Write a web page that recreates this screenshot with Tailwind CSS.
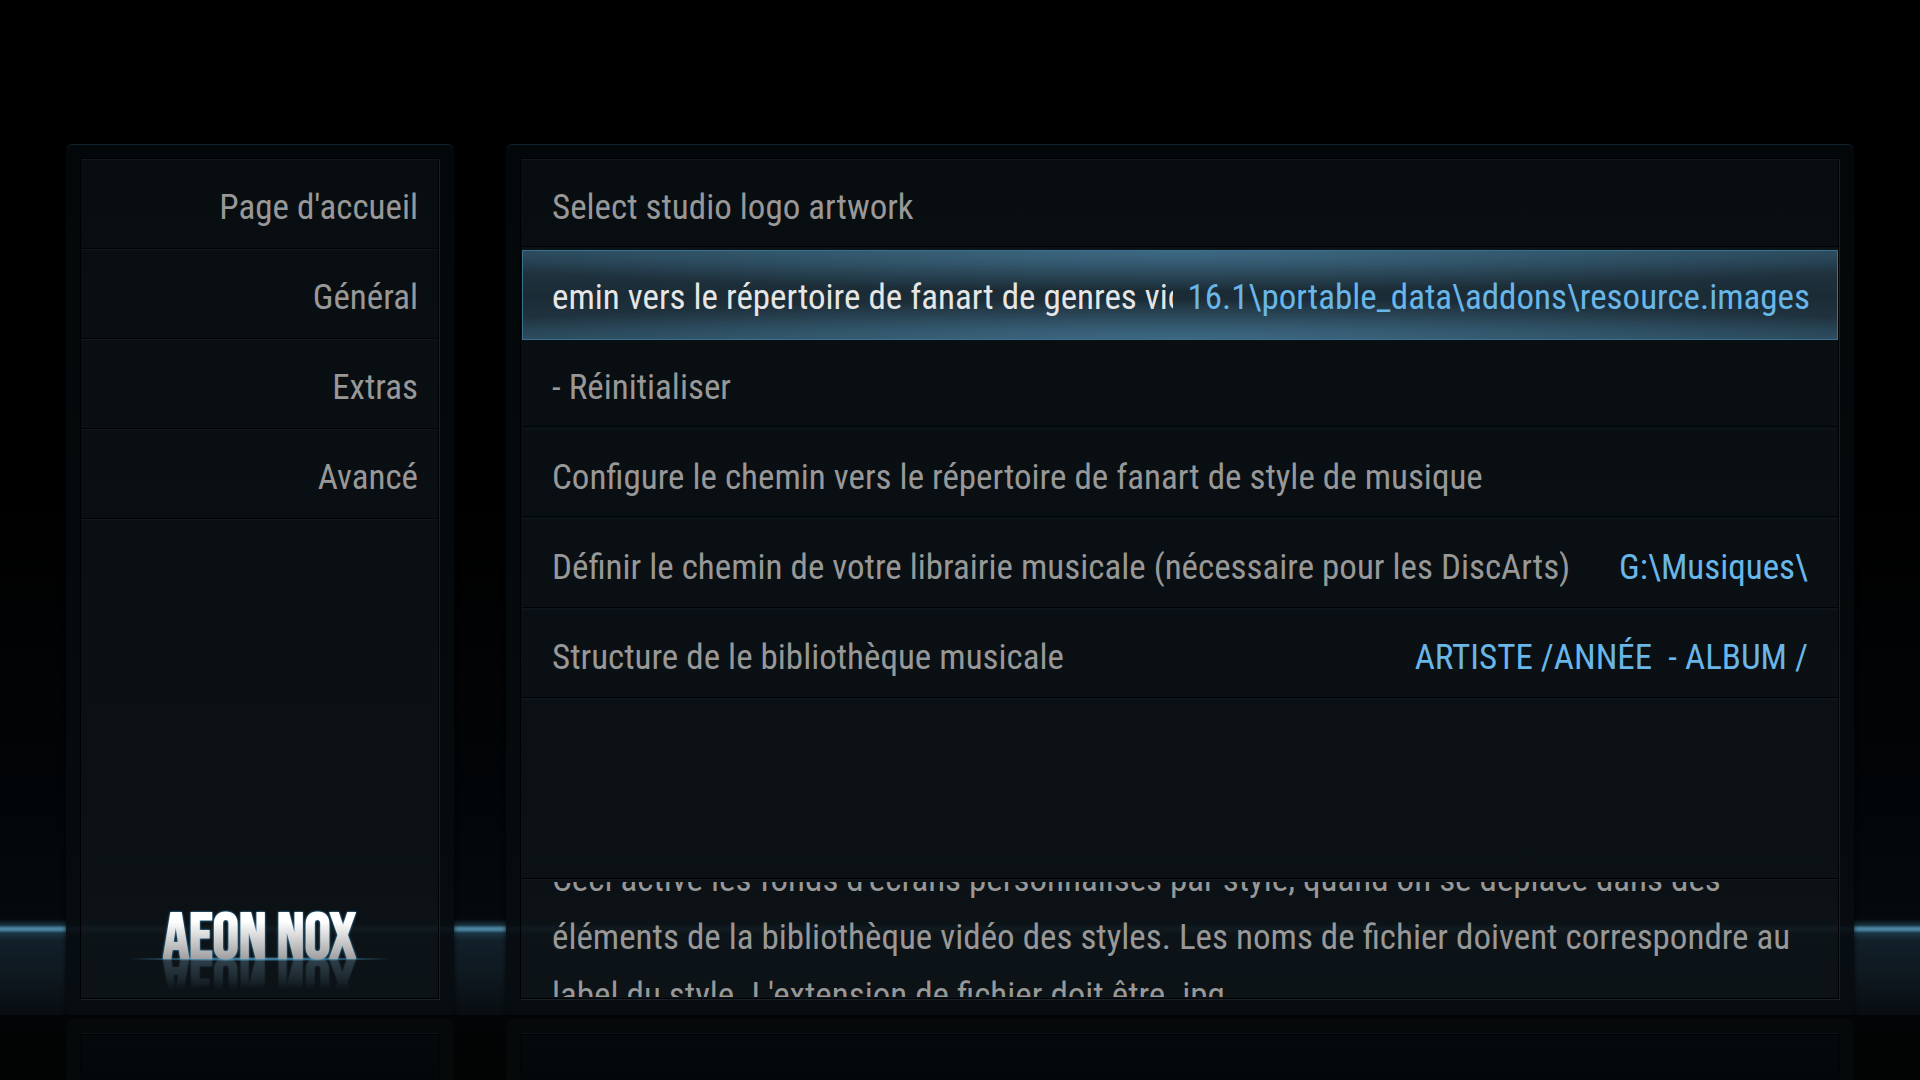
<!DOCTYPE html>
<html lang="fr">
<head>
<meta charset="utf-8">
<meta name="viewport" content="width=device-width, initial-scale=1">
<title>Aeon Nox - Extras</title>
<script src="https://cdn.jsdelivr.net/npm/@tailwindcss/browser@4"></script>
</head>
<body class="flex min-h-screen flex-col overflow-x-hidden bg-black bg-[linear-gradient(to_top,#020403_0px,#030607_45px,#0d151b_90px,#12202a_140px,#1a3644_147px,#4b83a0_150px,#4b83a0_152px,#17303c_155px,#05090b_161px,#020507_300px,#000_570px)] font-['Roboto_Condensed',Roboto,sans-serif] text-[35px] text-[#989898]">

<div class="grid flex-1 grid-cols-[388px_minmax(0,1fr)] gap-x-[52px] px-[66px] pt-[144px]">

  <!-- Category menu -->
  <aside class="flex flex-col rounded-md border-t border-[#10252f] bg-linear-to-b from-[#03080b]/92 to-[#070c10]/93 pt-[13px] pr-[15px] pb-4 pl-[14px] shadow-[0_0_5px_#000c]">
    <div class="flex flex-1 flex-col border border-black bg-[#8fa8bc]/4 pt-px shadow-[inset_0_1px_0_#12191e,1px_1px_0_#182228]">
      <nav aria-label="Catégories">
        <ul>
          <li><button type="button" class="h-[90px] w-full px-5 pt-1.5 text-right shadow-[inset_0_-1px_0_#10181c,inset_0_-2px_0_#010304]">Page d'accueil</button></li>
          <li><button type="button" class="h-[90px] w-full px-5 pt-1.5 text-right shadow-[inset_0_-1px_0_#10181c,inset_0_-2px_0_#010304]">Général</button></li>
          <li><button type="button" class="h-[90px] w-full px-5 pt-1.5 text-right shadow-[inset_0_-1px_0_#10181c,inset_0_-2px_0_#010304]">Extras</button></li>
          <li><button type="button" class="h-[90px] w-full px-5 pt-1.5 text-right shadow-[inset_0_-1px_0_#10181c,inset_0_-2px_0_#010304]">Avancé</button></li>
        </ul>
      </nav>
      <div class="mt-auto mb-[37px] flex flex-col items-center">
        <div class="drop-shadow-[0_0_1px_#4aa8e0]">
          <h1 class="bg-linear-to-b from-white from-20% to-[#9c9c9c] to-95% bg-clip-text pt-1 font-['Bebas_Neue','Roboto_Condensed',sans-serif] text-[65px] leading-[48px] font-bold text-transparent [-webkit-box-reflect:below_-9px_linear-gradient(transparent_30%,#ffffff33)]">AEON NOX</h1>
        </div>
        <div class="-mt-1.5 h-1 w-[270px] bg-[radial-gradient(closest-side,#4a8db4,#2d5b74_60%,transparent)]"></div>
      </div>
    </div>
  </aside>

  <!-- Settings -->
  <main class="flex flex-col rounded-md border-t border-[#10252f] bg-linear-to-b from-[#03080b]/92 to-[#070c10]/93 pt-[13px] pr-[15px] pb-4 pl-[14px] shadow-[0_0_5px_#000c]">
    <div class="flex flex-1 flex-col border border-black bg-[#8fa8bc]/4 pt-px pl-px shadow-[inset_0_1px_0_#12191e,1px_1px_0_#182228]">
      <ul>
        <li><button type="button" class="flex h-[90px] w-full items-center gap-[14px] pr-7 pl-[30px] pt-1.5 text-left whitespace-nowrap shadow-[inset_0_-3px_0_#0b1317,inset_0_-4px_0_#010304]">
          <span class="min-w-0 flex-1 overflow-hidden">Select studio logo artwork</span>
        </button></li>
        <li><button type="button" class="flex h-[90px] w-full items-center gap-[14px] bg-[radial-gradient(ellipse_60%_45%_at_50%_0,#3d6983,transparent),radial-gradient(ellipse_60%_45%_at_50%_100%,#3d6983,transparent),linear-gradient(#294759,#1f323e_25%,#1a2b35_50%,#1f323e_75%,#294759)] pr-7 pl-[30px] pt-1.5 text-left whitespace-nowrap text-[#e6e6e6] shadow-[inset_0_0_0_1px_#39708e]">
          <span class="min-w-0 flex-1 overflow-hidden">emin vers le répertoire de fanart de genres vidéo</span>
          <span class="shrink-0 text-[#69b6e8]">16.1\portable_data\addons\resource.images</span>
        </button></li>
        <li><button type="button" class="flex h-[90px] w-full items-center gap-[14px] pr-7 pl-[30px] pt-1.5 text-left whitespace-nowrap shadow-[inset_0_-3px_0_#0b1317,inset_0_-4px_0_#010304]">
          <span class="min-w-0 flex-1 overflow-hidden">- Réinitialiser</span>
        </button></li>
        <li><button type="button" class="flex h-[90px] w-full items-center gap-[14px] pr-7 pl-[30px] pt-1.5 text-left whitespace-nowrap shadow-[inset_0_-3px_0_#0b1317,inset_0_-4px_0_#010304]">
          <span class="min-w-0 flex-1 overflow-hidden">Configure le chemin vers le répertoire de fanart de style de musique</span>
        </button></li>
        <li><button type="button" class="flex h-[90px] w-full items-center gap-[14px] pr-[30px] pl-[30px] pt-1.5 text-left whitespace-nowrap shadow-[inset_0_-2px_0_#0d161c,inset_0_-3px_0_#010304]">
          <span class="min-w-0 flex-1 overflow-hidden">Définir le chemin de votre librairie musicale (nécessaire pour les DiscArts)</span>
          <span class="shrink-0 text-[#69b6e8]">G:\Musiques\</span>
        </button></li>
        <li><button type="button" class="flex h-[90px] w-full items-center gap-[14px] pr-[30px] pl-[30px] pt-1.5 text-left whitespace-nowrap shadow-[inset_0_-2px_0_#0d161c,inset_0_-3px_0_#010304]">
          <span class="min-w-0 flex-1 overflow-hidden">Structure de le bibliothèque musicale</span>
          <span class="shrink-0 whitespace-pre text-[#69b6e8]">ARTISTE /ANNÉE  - ALBUM /</span>
        </button></li>
      </ul>
      
      <div class="mt-auto border-t border-black pt-[3px] pb-px shadow-[inset_0_1px_0_#11191d]">
        <div class="flex h-[115px] items-center overflow-hidden px-[30px] pb-1">
          <p class="leading-[58px]">Ceci active les fonds d'écrans personnalisés par style, quand on se déplace dans des éléments de la bibliothèque vidéo des styles. Les noms de fichier doivent correspondre au label du style. L'extension de fichier doit être .jpg.</p>
        </div>
      </div>
    </div>
  </main>
</div>

<!-- Floor reflection of the two panels -->
<div aria-hidden="true" class="grid h-[65px] grid-cols-[388px_minmax(0,1fr)] gap-x-[52px] bg-linear-to-b from-black/60 to-transparent px-[66px] pt-1">
  <div class="flex rounded-t-md bg-[#05090b]/95 px-[14px] pt-[14px]"><div class="flex-1 border-x border-t border-x-[#020405] border-t-[#0a1115] bg-linear-to-b from-[#05090c] to-[#04070a] shadow-[inset_0_1px_0_#010203]"></div></div>
  <div class="flex rounded-t-md bg-[#05090b]/95 px-[14px] pt-[14px]"><div class="flex-1 border-x border-t border-x-[#020405] border-t-[#0a1115] bg-linear-to-b from-[#05090c] to-[#04070a] shadow-[inset_0_1px_0_#010203]"></div></div>
</div>
</body>
</html>
